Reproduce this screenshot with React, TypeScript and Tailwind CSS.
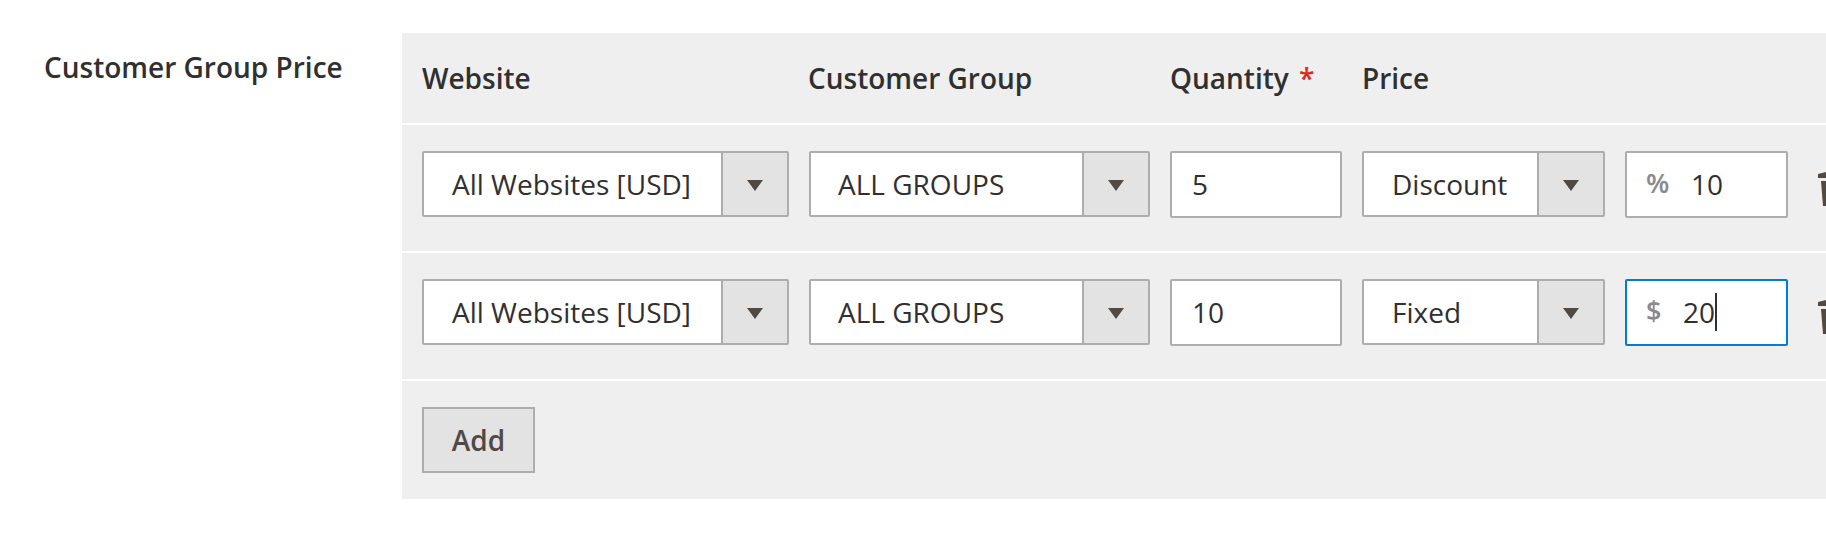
const font = "[font-family:'Open_Sans',sans-serif]";

function Select({ value, width, inset = "pl-[28px]" }: { value: string; width: string; inset?: string }) {
  return (
    <div className={`flex h-[66px] shrink-0 border-2 border-[#adadad] bg-white rounded-[2px] ${width}`}>
      <div className={`flex-1 flex items-center ${inset} text-[28px] text-[#303030] whitespace-nowrap`}>{value}</div>
      <div className="w-[66px] shrink-0 flex items-center justify-center pt-[3px] border-l-2 border-[#adadad] bg-[#e3e3e3]">
        <svg width="16" height="11" viewBox="0 0 16 11"><path d="M0 0h16L8 11z" fill="#514943" /></svg>
      </div>
    </div>
  );
}

function Trash() {
  return (
    <svg className="ml-[28px] mt-[19px] shrink-0" width="30" height="38" viewBox="0 0 30 38">
      <path d="M2 4l8-2V0h12v2l8 2v4H2z" fill="#514943" />
      <path d="M5 11h22l-2 25H7z" fill="#514943" />
    </svg>
  );
}

function Row({ type, qty, prefix, amount, focus }: { type: string; qty: string; prefix: string; amount: string; focus?: boolean }) {
  return (
    <div className="flex items-start h-[128px] pt-[26px] pl-[20px] border-t-2 border-white overflow-hidden">
      <Select value="All Websites [USD]" width="w-[367px]" />
      <div className="w-[20px] shrink-0" />
      <Select value="ALL GROUPS" width="w-[341px]" inset="pl-[27px]" />
      <div className="w-[20px] shrink-0" />
      <div className="w-[172px] h-[67px] shrink-0 border-2 border-[#adadad] bg-white rounded-[2px] flex items-center pl-[20px] pb-[2px] text-[28px] text-[#303030]">{qty}</div>
      <div className="w-[20px] shrink-0" />
      <Select value={type} width="w-[243px]" />
      <div className="w-[20px] shrink-0" />
      <div className={`w-[163px] h-[67px] shrink-0 border-2 bg-white rounded-[2px] flex items-center pb-[2px] text-[28px] text-[#303030] ${focus ? "border-[#007bdb]" : "border-[#adadad]"}`}>
        <span className={`${focus ? "w-[56px]" : "w-[64px]"} pl-[19px] font-semibold text-[#8a8a8a] text-[27px]`}>{prefix}</span>
        <span>{amount}</span>
        {focus && <span className="w-[2px] h-[38px] bg-[#303030]" />}
      </div>
      <Trash />
    </div>
  );
}

export default function App() {
  return (
    <div className={`${font} w-[1826px] h-[544px] overflow-hidden bg-white flex items-start pt-[33px]`}>
      <div className="w-[402px] shrink-0 pl-[44px] pt-[14px] text-[28px] font-semibold text-[#303030] leading-[40px] whitespace-nowrap">
        Customer Group Price
      </div>
      <div className="flex-1 min-w-0 h-[466px] bg-[#efefef] flex flex-col">
        <div className="flex items-center h-[90px] pl-[20px] pb-[1px] text-[28px] font-semibold text-[#303030] whitespace-nowrap">
          <div className="w-[386px] shrink-0">Website</div>
          <div className="w-[362px] shrink-0">Customer Group</div>
          <div className="w-[192px] shrink-0">
            Quantity <span className="text-[#e22626] ml-[3px]">*</span>
          </div>
          <div>Price</div>
        </div>
        <Row type="Discount" qty="5" prefix="%" amount="10" />
        <Row type="Fixed" qty="10" prefix="$" amount="20" focus />
        <div className="border-t-2 border-white pt-[26px] pl-[20px]">
          <div className="w-[113px] h-[66px] border-2 border-[#adadad] bg-[#e3e3e3] flex items-center justify-center text-[28px] font-semibold text-[#514943]">
            Add
          </div>
        </div>
      </div>
    </div>
  );
}
